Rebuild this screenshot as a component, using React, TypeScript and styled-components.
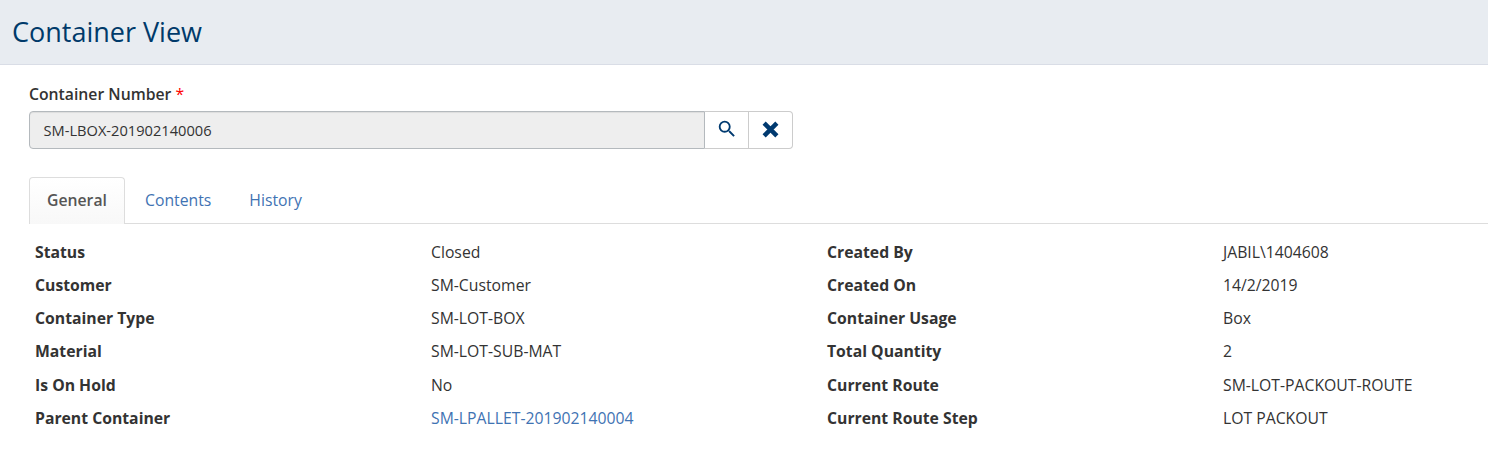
import React from 'react';
import styled, { createGlobalStyle } from 'styled-components';

const Global = createGlobalStyle`
  * { box-sizing: border-box; }
  body { margin: 0; background: #fff; color: #333; font: 400 15.75px/23px "Open Sans", sans-serif; overflow: hidden; }
`;
const Page = styled.div`height: 455px; overflow: hidden;`;
const Header = styled.header`
  height: 65px; padding: 0 12px; display: flex; align-items: center;
  background: #e8ecf1; border-bottom: 1px solid #d9dde6;
`;
const Title = styled.h1`margin: 0; color: #003a6a; font-size: 27px; font-weight: 400; line-height: 36px;`;
const Field = styled.section`padding: 18px 0 0 29px;`;
const Label = styled.label`display: block; font-weight: 600; line-height: 22px; margin-bottom: 6px;`;
const Required = styled.span`color: #f00; font-weight: 400;`;
const InputGroup = styled.div`display: flex; width: 764px; height: 38px;`;
const Value = styled.div`
  flex: 1; padding: 0 13.5px; line-height: 37px; font-size: 14.65px; background: #eee;
  border: 1px solid #b4b9bd; border-radius: 4px 0 0 4px; box-shadow: inset 0 1px 1px rgba(0,0,0,.075);
`;
const IconButton = styled.button<{ $last?: boolean }>`
  width: 44px; padding: 0 0 2px; border: 1px solid #ccc; border-left-width: 0;
  border-radius: ${p => (p.$last ? '0 4px 4px 0' : '0')};
  background: #fff; color: #003a70; display: flex; align-items: center; justify-content: center;
`;
const Tabs = styled.nav`display: flex; margin: 28px 0 0 29px; height: 47px; border-bottom: 1px solid #ddd;`;
const Tab = styled.a<{ $active?: boolean }>`
  height: 47px; line-height: 46px; padding: 0 19px; color: #3f73b3;
  ${p => p.$active && `
    width: 96px; padding: 0 17px; line-height: 44px; color: #555; font-weight: 600;
    background: linear-gradient(#fff, #f8f8f8);
    border: 1px solid #ddd; border-bottom: 0; border-radius: 4px 4px 0 0;
  `}
  & + & { padding-left: 20px; padding-right: 18px; }
`;
const Details = styled.dl`
  margin: 12px 0 0 35px; width: 1585px; display: grid; grid-template-columns: repeat(4, 396px);
  grid-auto-rows: 33.15px; line-height: 33px;
`;
const Term = styled.dt`font-weight: 700;`;
const Data = styled.dd`margin: 0;`;
const Link = styled.a`color: #3f73b3;`;

const rows = [
  ['Status', 'Closed', 'Created By', 'JABIL\\1404608'],
  ['Customer', 'SM-Customer', 'Created On', '14/2/2019'],
  ['Container Type', 'SM-LOT-BOX', 'Container Usage', 'Box'],
  ['Material', 'SM-LOT-SUB-MAT', 'Total Quantity', '2'],
  ['Is On Hold', 'No', 'Current Route', 'SM-LOT-PACKOUT-ROUTE'],
  ['Parent Container', 'SM-LPALLET-201902140004', 'Current Route Step', 'LOT PACKOUT'],
];

export default function App() {
  return (
    <Page>
      <Global />
      <Header><Title>Container View</Title></Header>
      <Field>
        <Label>Container Number <Required>*</Required></Label>
        <InputGroup>
          <Value>SM-LBOX-201902140006</Value>
          <IconButton aria-label="Search">
            <svg width="22" height="22" viewBox="0 0 24 24" fill="currentColor"><path d="M15.5 14h-.79l-.28-.27A6.47 6.47 0 0 0 16 9.5 6.5 6.5 0 1 0 9.5 16c1.61 0 3.09-.59 4.23-1.57l.27.28v.79l5 4.99L20.49 19l-4.99-5zm-6 0a4.5 4.5 0 1 1 0-9 4.5 4.5 0 0 1 0 9z" /></svg>
          </IconButton>
          <IconButton $last aria-label="Clear">
            <svg width="17" height="17" viewBox="0 0 16 16" stroke="currentColor" strokeWidth="4.2"><path d="M2 2l12 12M14 2L2 14" /></svg>
          </IconButton>
        </InputGroup>
      </Field>
      <Tabs><Tab $active>General</Tab><Tab>Contents</Tab><Tab>History</Tab></Tabs>
      <Details>
        {rows.map(([a, b, c, d]) => (
          <React.Fragment key={a}>
            <Term>{a}</Term><Data>{a === 'Parent Container' ? <Link>{b}</Link> : b}</Data>
            <Term>{c}</Term><Data>{d}</Data>
          </React.Fragment>
        ))}
      </Details>
    </Page>
  );
}
